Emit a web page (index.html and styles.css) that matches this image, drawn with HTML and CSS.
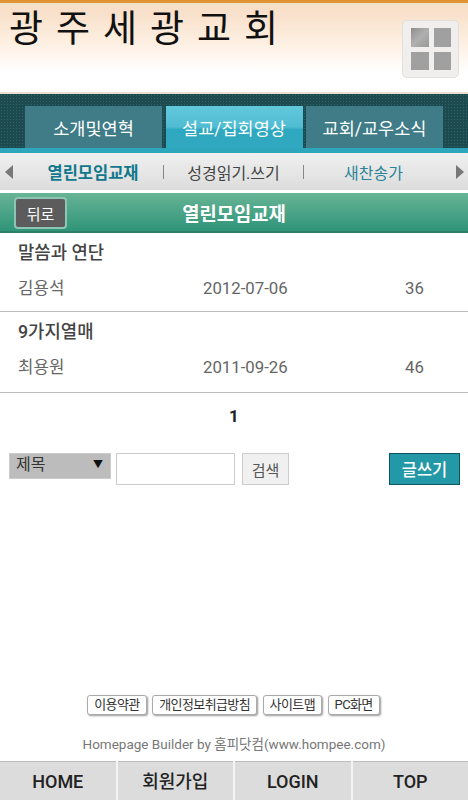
FILE: index.html
```html
<!DOCTYPE html>
<html lang="ko">
<head>
    <meta charset="UTF-8">
    <meta name="viewport" content="width=device-width, initial-scale=1.0">
    <title>광주세광교회</title>
    <link rel="stylesheet" href="styles.css">
</head>
<body>
    <div class="page">
        <header class="top">
            <h1>광 주 세 광 교 회</h1>
            <div class="grid-btn"><i></i><i></i><i></i><i></i></div>
        </header>

        <nav class="tabs">
            <a class="tab">소개및연혁</a>
            <a class="tab on">설교/집회영상</a>
            <a class="tab">교회/교우소식</a>
        </nav>

        <div class="subnav">
            <span class="arrow left"></span>
            <a class="sub cur">열린모임교재</a>
            <span class="bar"></span>
            <a class="sub">성경읽기.쓰기</a>
            <span class="bar"></span>
            <a class="sub teal">새찬송가</a>
            <span class="arrow right"></span>
        </div>

        <div class="title-bar">
            <a class="back">뒤로</a>
            <h2>열린모임교재</h2>
        </div>

        <div class="post">
            <div class="subject">말씀과 연단</div>
            <div class="meta"><span class="name">김용석</span><span class="date">2012-07-06</span><span class="hits">36</span></div>
        </div>
        <div class="post">
            <div class="subject">9가지열매</div>
            <div class="meta"><span class="name">최용원</span><span class="date">2011-09-26</span><span class="hits">46</span></div>
        </div>

        <div class="paging">1</div>

        <div class="search">
            <div class="select">제목<span class="caret">▼</span></div>
            <input class="keyword" type="text">
            <button class="find">검색</button>
            <button class="write">글쓰기</button>
        </div>

        <div class="spacer"></div>

        <div class="links">
            <a>이용약관</a>
            <a>개인정보취급방침</a>
            <a>사이트맵</a>
            <a>PC화면</a>
        </div>
        <div class="credit">Homepage Builder by 홈피닷컴(www.hompee.com)</div>

        <footer class="bottom">
            <a>HOME</a>
            <a>회원가입</a>
            <a>LOGIN</a>
            <a>TOP</a>
        </footer>
    </div>
</body>
</html>
```

FILE: styles.css
```css
* {
    box-sizing: border-box;
}
html, body {
    margin: 0;
    padding: 0;
}
body {
    font-family: Roboto, "Noto Sans CJK KR", sans-serif;
    background: #fff;
    color: #333;
}
.page {
    width: 468px;
    height: 800px;
    display: flex;
    flex-direction: column;
    overflow: hidden;
}
.top {
    height: 94px;
    padding: 5px 9px 0 9px;
    display: flex;
    justify-content: space-between;
    border-top: 3px solid #e09436;
    border-bottom: 2px solid #e8e0d0;
    background: linear-gradient(to bottom, #f0e4c8 0, #f8dfc8 6px, #fdf0e2 40px, #fff 70px);
}
.top h1 {
    margin: 0;
    font-size: 37px;
    line-height: 44px;
    font-weight: 400;
    color: #111;
    letter-spacing: 1.4px;
    word-spacing: 1px;
}
.grid-btn {
    width: 57px;
    height: 58px;
    margin-top: 12px;
    padding: 7px 7px 7px 8px;
    display: grid;
    grid-template-columns: 1fr 1fr;
    gap: 5px;
    background: #f1efee;
    border: 1px solid #e2e0de;
    border-radius: 5px;
}
.grid-btn i {
    background: #a0a0a0;
}
.grid-btn i:first-child {
    background: linear-gradient(135deg, #8e8e8e, #b0b0b0 50%, #999);
}
.tabs {
    height: 54px;
    padding: 11px 24px 0;
    display: flex;
    gap: 1.5px;
    background-color: #1d4a4e;
    background-image: radial-gradient(#2f6468 1px, transparent 1px);
    background-size: 3px 3px;
}
.tab {
    width: 139px;
    height: 43px;
    display: flex;
    align-items: center;
    justify-content: center;
    font-size: 17.5px;
    color: #fff;
    background: #3f7c88;
    border: 1px solid #1c4c55;
    border-bottom: 0;
}
.tab.on {
    background: linear-gradient(to bottom, #62c8dc 0, #50bcd2 50%, #2ea8c0 56%, #30a8c0 100%);
}
.subnav {
    height: 42px;
    display: flex;
    align-items: center;
    border-top: 5px solid #2ea6bc;
    background: linear-gradient(to bottom, #f0f0f0, #dcdcdc);
    font-size: 16px;
}
.arrow {
    width: 0;
    height: 0;
    border-top: 7px solid transparent;
    border-bottom: 7px solid transparent;
    flex: none;
}
.arrow.left {
    margin-left: 5px;
    border-right: 8px solid #777;
}
.arrow.right {
    margin-left: 13px;
    border-left: 8px solid #777;
}
.sub {
    flex: none;
    width: 139px;
    text-align: center;
    color: #444;
}
.sub.cur {
    width: 150px;
    padding-left: 10px;
    color: #10788c;
    font-weight: 700;
    font-size: 16.5px;
}
.sub.teal {
    color: #2a8498;
}
.bar {
    width: 1px;
    height: 14px;
    background: #888;
    flex: none;
}
.title-bar {
    height: 43px;
    position: relative;
    display: flex;
    align-items: center;
    justify-content: center;
    border-top: 3px solid #fff;
    border-bottom: 2px solid #2a8068;
    background: linear-gradient(to bottom, #68b496, #2f9478);
}
.title-bar h2 {
    margin: 0;
    font-size: 18.8px;
    font-weight: 700;
    color: #fff;
}
.back {
    position: absolute;
    left: 14px;
    top: 4px;
    width: 53px;
    height: 32px;
    display: flex;
    align-items: center;
    justify-content: center;
    font-size: 15px;
    color: #fff;
    background: #5c5c5c;
    border: 2px solid #8fc4b4;
    border-radius: 4px;
}
.post {
    height: 79px;
    padding: 8px 18px 0;
    border-bottom: 1px solid #bbb;
}
.post + .post {
    height: 81px;
}
.subject {
    font-size: 17.8px;
    line-height: 24px;
    font-weight: 500;
    color: #444;
}
.meta {
    margin-top: 11px;
    display: flex;
    font-size: 16.8px;
    line-height: 24px;
    color: #666;
}
.name {
    width: 185px;
}
.date {
    width: 202px;
}
.paging {
    height: 46px;
    line-height: 46px;
    text-align: center;
    font-size: 17px;
    font-weight: 700;
    color: #222;
}
.search {
    margin-top: 14px;
    padding: 0 8px 0 9px;
    height: 32px;
    display: flex;
    align-items: flex-start;
}
.select {
    width: 102px;
    height: 26px;
    padding-left: 6px;
    display: flex;
    justify-content: space-between;
    font-size: 16px;
    line-height: 22px;
    color: #333;
    background: #bcbcbc;
    border: 1px solid #ccc;
}
.caret {
    font-size: 10px;
    margin-right: 7px;
    color: #111;
}
.keyword {
    width: 119px;
    height: 32px;
    margin-left: 5px;
    background: #fff;
    border: 1px solid #ccc;
}
.find {
    width: 47px;
    height: 32px;
    margin-left: 7px;
    padding: 0;
    font: inherit;
    font-size: 15px;
    color: #555;
    background: #f0f0f0;
    border: 1px solid #ccc;
}
.write {
    width: 71px;
    height: 32px;
    margin-left: auto;
    padding: 0;
    font: inherit;
    font-size: 16.5px;
    font-weight: 500;
    color: #fff;
    background: #2399a8;
    border: 1px solid #0f5560;
}
.spacer {
    flex: 1;
}
.links {
    display: flex;
    justify-content: center;
    gap: 5.5px;
    margin-bottom: 20px;
    padding-right: 1px;
}
.links a {
    height: 20px;
    padding: 0 6px;
    font-size: 13px;
    line-height: 18px;
    letter-spacing: -0.6px;
    color: #333;
    background: #fff;
    border: 1px solid #aaa;
    border-radius: 3px;
    box-shadow: 1px 1px 2px #999;
}
.credit {
    height: 26px;
    text-align: center;
    font-size: 13.5px;
    line-height: 18px;
    color: #777;
}
.bottom {
    height: 39px;
    display: flex;
    gap: 2px;
    background: #f4f4f4;
}
.bottom a {
    flex: 1;
    text-align: center;
    font-size: 18px;
    line-height: 40px;
    font-weight: 500;
    color: #222;
    background: #dcdcdc;
    border-top: 1px solid #bbb;
}
```
